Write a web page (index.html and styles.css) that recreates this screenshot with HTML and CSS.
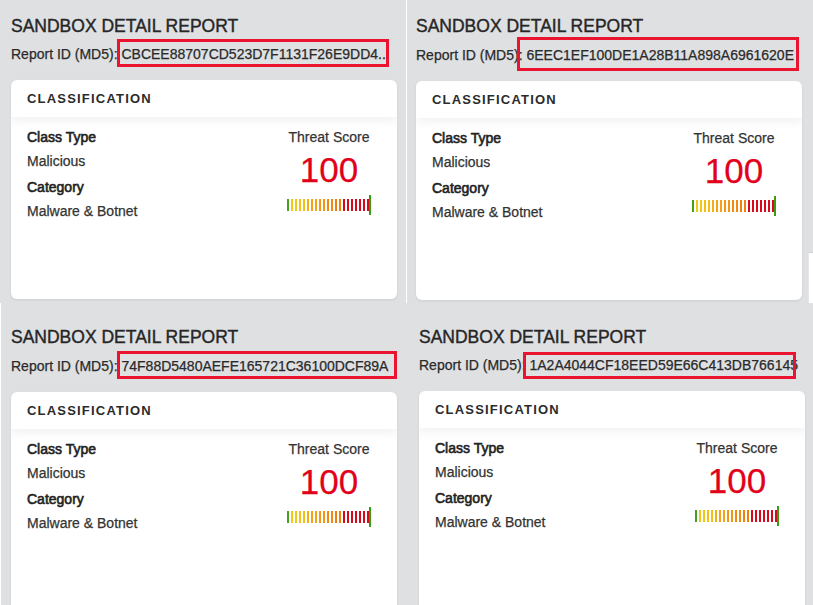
FILE: index.html
```html
<!DOCTYPE html>
<html lang="en">
<head>
    <meta charset="UTF-8">
    <title>Sandbox Detail Report</title>
    <link rel="stylesheet" href="styles.css">
</head>
<body>

    <div class="row row-top">
        <section class="panel p1">
            <h2 class="title">SANDBOX DETAIL REPORT</h2>
            <p class="report">Report ID (MD5): <span>CBCEE88707CD523D7F1131F26E9DD4...</span></p>
            <div class="mark mark-1"></div>
            <div class="card">
                <div class="card-head">CLASSIFICATION</div>
                <div class="card-body">
                    <div class="info">
                        <div class="label">Class Type</div>
                        <div class="value">Malicious</div>
                        <div class="label next">Category</div>
                        <div class="value">Malware &amp; Botnet</div>
                    </div>
                    <div class="threat">
                        <div class="threat-title">Threat Score</div>
                        <div class="score">100</div>
                        <div class="gauge">
                            <i class="g"></i><i class="y1"></i><i class="y1"></i><i class="y2"></i><i class="y2"></i><i class="y3"></i><i class="o1"></i><i class="o1"></i><i class="o2"></i><i class="o2"></i><i class="o3"></i><i class="o3"></i><i class="o4"></i><i class="o4"></i><i class="r"></i><i class="r"></i><i class="r"></i><i class="r"></i><i class="r"></i><i class="r"></i><i class="r"></i><b class="marker"></b>
                        </div>
                    </div>
                </div>
            </div>
        </section>

        <section class="panel p2">
            <h2 class="title">SANDBOX DETAIL REPORT</h2>
            <p class="report">Report ID (MD5): <span>6EEC1EF100DE1A28B11A898A6961620E</span></p>
            <div class="mark mark-2"></div>
            <div class="card">
                <div class="card-head">CLASSIFICATION</div>
                <div class="card-body">
                    <div class="info">
                        <div class="label">Class Type</div>
                        <div class="value">Malicious</div>
                        <div class="label next">Category</div>
                        <div class="value">Malware &amp; Botnet</div>
                    </div>
                    <div class="threat">
                        <div class="threat-title">Threat Score</div>
                        <div class="score">100</div>
                        <div class="gauge">
                            <i class="g"></i><i class="y1"></i><i class="y1"></i><i class="y2"></i><i class="y2"></i><i class="y3"></i><i class="o1"></i><i class="o1"></i><i class="o2"></i><i class="o2"></i><i class="o3"></i><i class="o3"></i><i class="o4"></i><i class="o4"></i><i class="r"></i><i class="r"></i><i class="r"></i><i class="r"></i><i class="r"></i><i class="r"></i><i class="r"></i><b class="marker"></b>
                        </div>
                    </div>
                </div>
            </div>
            <div class="edge"></div>
        </section>
    </div>

    <div class="row row-bottom">
        <section class="panel p3">
            <h2 class="title">SANDBOX DETAIL REPORT</h2>
            <p class="report">Report ID (MD5): <span>74F88D5480AEFE165721C36100DCF89A</span></p>
            <div class="mark mark-3"></div>
            <div class="card">
                <div class="card-head">CLASSIFICATION</div>
                <div class="card-body">
                    <div class="info">
                        <div class="label">Class Type</div>
                        <div class="value">Malicious</div>
                        <div class="label next">Category</div>
                        <div class="value">Malware &amp; Botnet</div>
                    </div>
                    <div class="threat">
                        <div class="threat-title">Threat Score</div>
                        <div class="score">100</div>
                        <div class="gauge">
                            <i class="g"></i><i class="y1"></i><i class="y1"></i><i class="y2"></i><i class="y2"></i><i class="y3"></i><i class="o1"></i><i class="o1"></i><i class="o2"></i><i class="o2"></i><i class="o3"></i><i class="o3"></i><i class="o4"></i><i class="o4"></i><i class="r"></i><i class="r"></i><i class="r"></i><i class="r"></i><i class="r"></i><i class="r"></i><i class="r"></i><b class="marker"></b>
                        </div>
                    </div>
                </div>
            </div>
        </section>

        <section class="panel p4">
            <h2 class="title">SANDBOX DETAIL REPORT</h2>
            <p class="report">Report ID (MD5): <span>1A2A4044CF18EED59E66C413DB766145</span></p>
            <div class="mark mark-4"></div>
            <div class="card">
                <div class="card-head">CLASSIFICATION</div>
                <div class="card-body">
                    <div class="info">
                        <div class="label">Class Type</div>
                        <div class="value">Malicious</div>
                        <div class="label next">Category</div>
                        <div class="value">Malware &amp; Botnet</div>
                    </div>
                    <div class="threat">
                        <div class="threat-title">Threat Score</div>
                        <div class="score">100</div>
                        <div class="gauge">
                            <i class="g"></i><i class="y1"></i><i class="y1"></i><i class="y2"></i><i class="y2"></i><i class="y3"></i><i class="o1"></i><i class="o1"></i><i class="o2"></i><i class="o2"></i><i class="o3"></i><i class="o3"></i><i class="o4"></i><i class="o4"></i><i class="r"></i><i class="r"></i><i class="r"></i><i class="r"></i><i class="r"></i><i class="r"></i><i class="r"></i><b class="marker"></b>
                        </div>
                    </div>
                </div>
            </div>
        </section>
    </div>

</body>
</html>
```

FILE: styles.css
```css
body {
    margin: 0;
    background-color: #dfe0e2;
    font-family: "Liberation Sans", Arial, sans-serif;
    color: #333;
    overflow: hidden;
    -webkit-text-stroke: 0.25px currentColor;
}
.row {
    display: flex;
}
.row-top {
    height: 303px;
}
.row-bottom {
    height: 302px;
}
.panel {
    position: relative;
    box-sizing: border-box;
    overflow: hidden;
}
.p1 {
    width: 406px;
    padding: 15px 0 0 11px;
}
.p2 {
    width: 407px;
    border-left: 1px solid #fff;
    padding: 15px 0 0 9px;
}
.p3 {
    width: 405px;
    border-left: 1px solid #fff;
    padding: 23px 0 0 10px;
}
.p4 {
    width: 408px;
    padding: 23px 0 0 14px;
}
.title {
    margin: 0;
    font-size: 17.5px;
    font-weight: normal;
    line-height: 22px;
    color: #262626;
    -webkit-text-stroke: 0.4px currentColor;
}
.report {
    margin: 7px 0 0;
    font-size: 14px;
    line-height: 20px;
    white-space: nowrap;
    color: #2a2a2a;
}
.p2 .report, .p3 .report {
    margin-top: 8px;
}

/* red annotation boxes drawn over the report id */
.mark {
    position: absolute;
    box-sizing: border-box;
    border: 3px solid #ea1430;
}
.mark-1 { left: 117px; top: 39px; width: 272px; height: 28px; }
.mark-2 { left: 110px; top: 37px; width: 282px; height: 34px; }
.mark-3 { left: 116px; top: 48px; width: 280px; height: 28px; }
.mark-4 { left: 118px; top: 49px; width: 273px; height: 27px; }

.card {
    width: 386px;
    height: 219px;
    margin-top: 16px;
    background-color: #fff;
    border-radius: 6px;
    box-shadow: 0 1px 3px rgba(0,0,0,0.08);
    overflow: hidden;
}
.card-head {
    position: relative;
    height: 37px;
    line-height: 37px;
    padding: 0 16px;
    font-size: 13px;
    font-weight: bold;
    letter-spacing: 1.2px;
    color: #2b2b2b;
    -webkit-text-stroke: 0;
    box-shadow: 0 4px 10px rgba(0,0,0,0.06);
}
.card-body {
    display: flex;
    justify-content: space-between;
    padding: 8px 18px 0 16px;
}
.label {
    font-size: 14px;
    line-height: 24px;
    color: #222;
    -webkit-text-stroke: 0.6px currentColor;
}
.label.next {
    margin-top: 2px;
}
.value {
    font-size: 14px;
    line-height: 24px;
}
.threat {
    width: 100px;
    text-align: center;
}
.threat-title {
    font-size: 14px;
    line-height: 24px;
}
.score {
    font-size: 35px;
    line-height: 42px;
    color: #e2001a;
}
.gauge {
    display: flex;
    justify-content: center;
    align-items: center;
    height: 20px;
    margin-top: 4px;
}
.gauge i {
    display: block;
    width: 2px;
    height: 12px;
    margin-right: 2px;
}
.gauge .g { background-color: #46a019; }
.gauge .y1 { background-color: #f2c812; }
.gauge .y2 { background-color: #f2c010; }
.gauge .y3 { background-color: #f4ad18; }
.gauge .o1 { background-color: #f4a216; }
.gauge .o2 { background-color: #f29613; }
.gauge .o3 { background-color: #f08b10; }
.gauge .o4 { background-color: #ee810c; }
.gauge .r { background-color: #da081d; }
.gauge .marker {
    display: block;
    width: 2px;
    height: 20px;
    margin-left: -2px;
    background-color: #3e9a10;
}
.edge {
    position: absolute;
    right: 0;
    top: 252px;
    width: 4px;
    height: 50px;
    background-color: #fff;
    border-top: 1px solid #cfd0d2;
    border-left: 1px solid #e6e6e8;
}
```
